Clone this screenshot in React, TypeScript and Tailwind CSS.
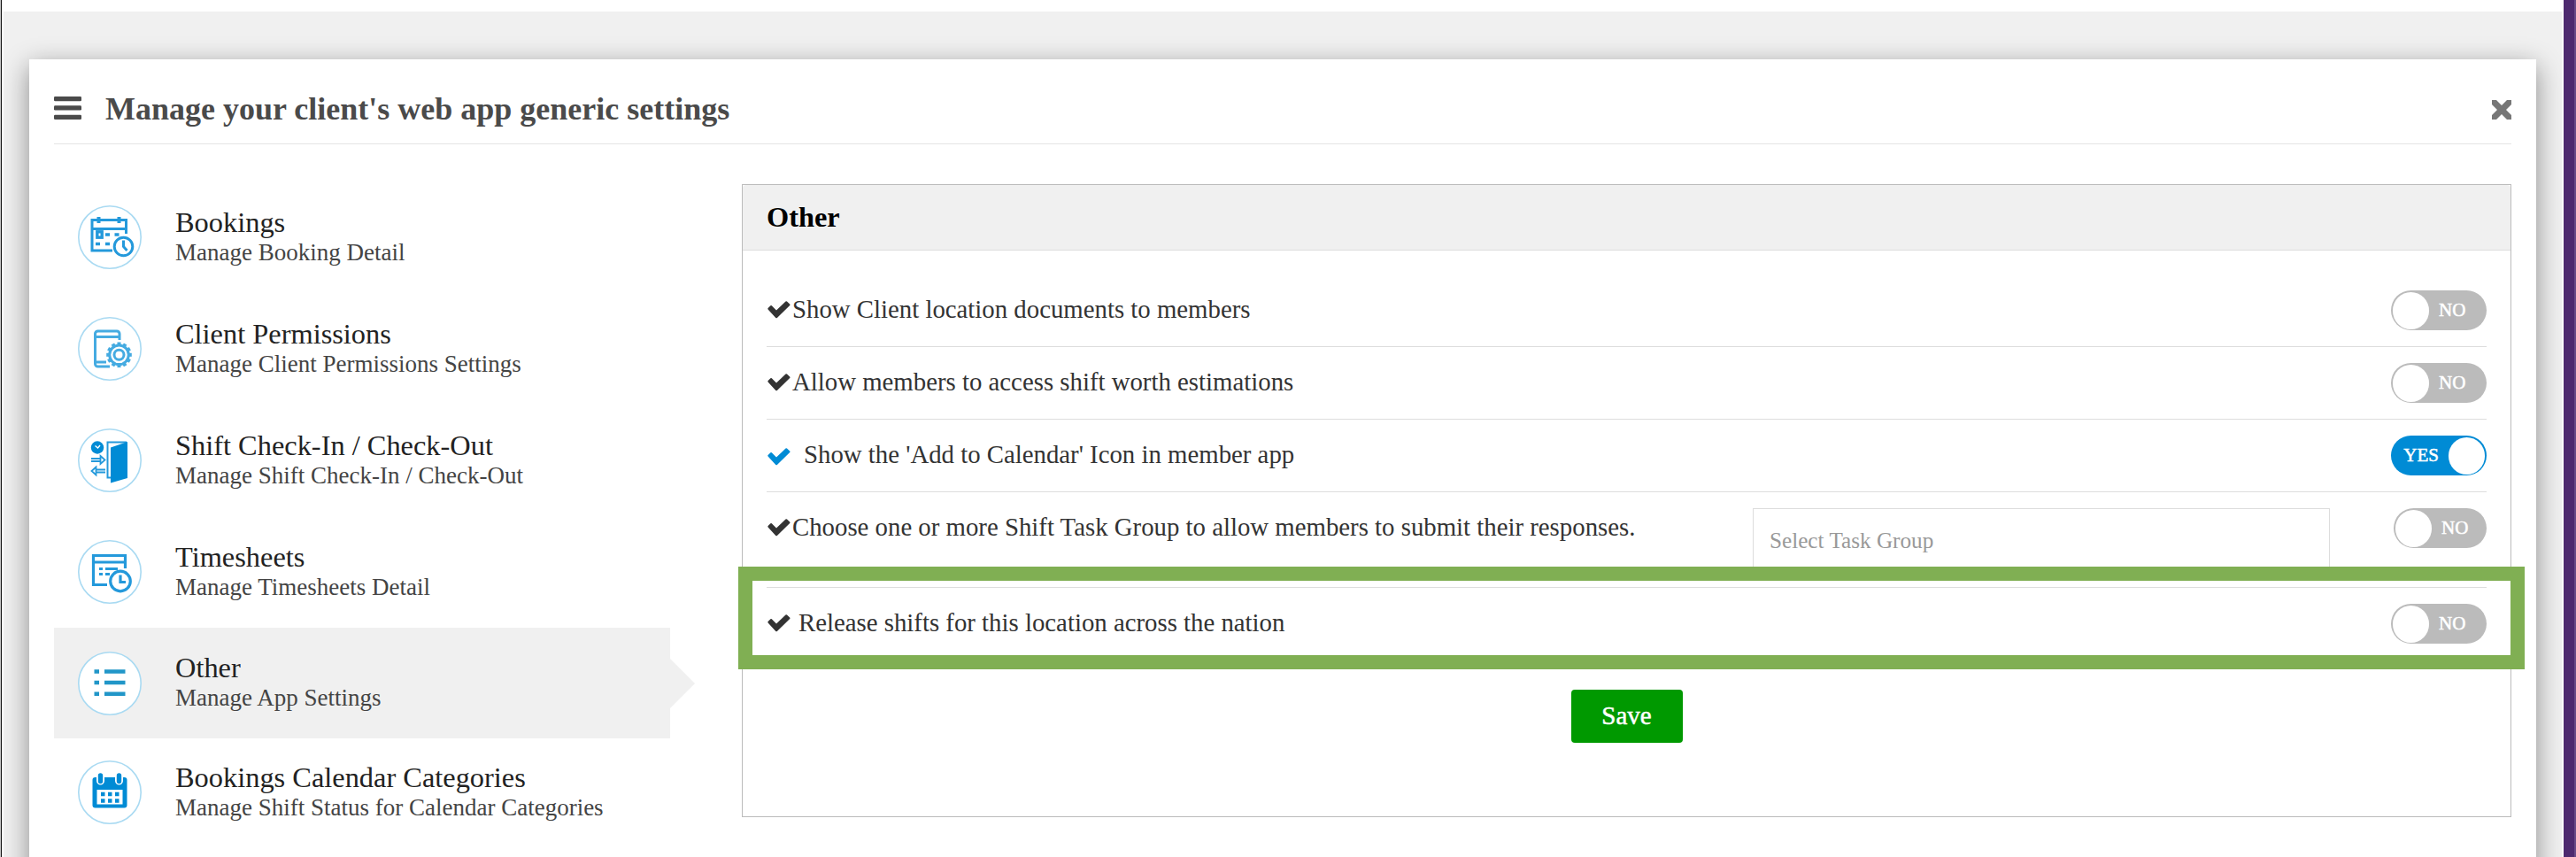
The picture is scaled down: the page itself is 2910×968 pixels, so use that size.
import type { ReactNode } from 'react';
import { clsx } from 'clsx';

const BLUE = '#008bd5';

type MenuItem = {
  title: string;
  subtitle: string;
  icon: ReactNode;
  active?: boolean;
  height: string;
};

type Setting = {
  label: string;
  on?: boolean;
  gap: string;
  select?: string;
  height: string;
};

function IconCircle({ children }: { children: ReactNode }) {
  return (
    <svg viewBox="0 0 72 72" className="h-[72px] w-[72px] shrink-0" fill="none" stroke="#2499db" strokeWidth="3">
      <circle cx="36" cy="36" r="35.2" fill="#fff" stroke="#a9daf2" strokeWidth="1.6" />
      {children}
    </svg>
  );
}

function BookingsIcon() {
  return (
    <IconCircle>
      <path d="M39 51H16V16.5h38.5V32M16 26.5h38.5" />
      <path d="M23.5 13v7M46.5 13v7" strokeWidth="4" />
      <rect x="21.8" y="29.8" width="5.4" height="6.4" strokeWidth="3.4" />
      <path d="M31 33h5M41.5 33h5M20 43.5h5M31 43.5h5" strokeWidth="3.4" />
      <circle cx="51.5" cy="46.5" r="10.3" />
      <path d="M51.5 39.5v7l4 4.5" />
    </IconCircle>
  );
}

function PermissionsIcon() {
  const teeth = Array.from({ length: 12 }, (_, i) => i * 30);
  return (
    <IconCircle>
      <path d="M36 56H22.5a3 3 0 0 1-3-3V19a3 3 0 0 1 3-3H44a3 3 0 0 1 3 3v7M20 22.5h27M20 51h12" stroke="#45abe1" />
      {teeth.map((angle) => (
        <path key={angle} d="M46.5 32.5v-4" strokeWidth="4" stroke="#45abe1" transform={`rotate(${angle} 46.5 42.8)`} />
      ))}
      <circle cx="46.5" cy="42.8" r="10.8" stroke="#45abe1" fill="#fff" />
      <circle cx="46.5" cy="42.8" r="5.5" stroke="#45abe1" />
    </IconCircle>
  );
}

function CheckInIcon() {
  return (
    <IconCircle>
      <circle cx="22" cy="21.5" r="7.2" fill={BLUE} stroke="none" />
      <path d="M19.5 19.5l3 2.5 2.5-3" stroke="#fff" strokeWidth="1.4" />
      <path d="M15 34h11M15 37h11M25.5 31l5 4.5-5 4.5z" strokeWidth="1.8" />
      <path d="M20 46.5h11M20 49.5h11M20.5 43.5l-5 4.5 5 4.5z" strokeWidth="1.8" />
      <path d="M37 55.5h-3.5V15.5H55" strokeWidth="2" />
      <path d="M37 21.5L56 15v41l-19 5.5z" fill={BLUE} stroke="none" />
    </IconCircle>
  );
}

function TimesheetsIcon() {
  return (
    <IconCircle>
      <path d="M33 50.5H17.5v-33h36V32M17.5 25h36" strokeWidth="3.2" />
      <path d="M24 32.5h4M31 32.5h14M24 38.5h4M31 38.5h5" strokeWidth="3.2" />
      <circle cx="48" cy="46.5" r="11.3" strokeWidth="3.2" />
      <path d="M48 39.5v8h6" strokeWidth="3.2" />
    </IconCircle>
  );
}

function ListIcon() {
  return (
    <IconCircle>
      <path
        d="M18.5 22.5h5.5M30 22.5h23.5M18.5 35h5.5M30 35h23.5M18.5 47.8h5.5M30 47.8h23.5"
        stroke="#2196c8"
        strokeWidth="4.4"
      />
    </IconCircle>
  );
}

function CalendarIcon() {
  const dots = [26, 34, 42];
  return (
    <IconCircle>
      <rect x="16.5" y="19" width="39" height="34.5" rx="3" fill={BLUE} stroke="none" />
      <rect x="21.5" y="33" width="29" height="16.5" fill="#fff" stroke="none" />
      <path d="M25.5 14v9M46.5 14v9" stroke="#fff" strokeWidth="9" strokeLinecap="round" />
      <path d="M25.5 17v6.5M46.5 17v6.5" stroke={BLUE} strokeWidth="5.4" strokeLinecap="round" />
      {dots.map((x) => (
        <path key={x} d={`M${x} 38h4.5M${x} 45.5h4.5`} stroke={BLUE} strokeWidth="4.4" />
      ))}
    </IconCircle>
  );
}

function Check({ className }: { className: string }) {
  return (
    <svg viewBox="0 0 26 20" className={clsx('ml-px h-5 w-[26px] shrink-0', className)} fill="currentColor">
      <path d="M0.6 9.5Q0 8.8 0.6 8.1L3.4 5.3Q4.1 4.7 4.8 5.3L10 10.5 20.5 0.6Q21.3 0 22 0.6L25.2 3.6Q25.9 4.3 25.2 5L10.9 18.9Q10.1 19.6 9.3 18.9Z" />
    </svg>
  );
}

function Toggle({ on, narrow }: { on?: boolean; narrow?: boolean }) {
  return (
    <button
      className={clsx(
        'flex h-[45px] shrink-0 items-center rounded-full px-[2px] text-[21px] leading-none text-white [-webkit-text-stroke:0.5px]',
        narrow ? 'w-[105px]' : 'w-[108px]',
        on ? 'flex-row-reverse bg-[#008bd5]' : 'bg-[#bbbbbb]'
      )}
    >
      <span className="h-[42px] w-[41px] rounded-full bg-white" />
      <span className={clsx('-mt-px', on ? 'mr-[11px]' : 'ml-[11px]')}>{on ? 'YES' : 'NO'}</span>
    </button>
  );
}

const menu: MenuItem[] = [
  { title: 'Bookings', subtitle: 'Manage Booking Detail', icon: <BookingsIcon />, height: 'h-[126px]' },
  { title: 'Client Permissions', subtitle: 'Manage Client Permissions Settings', icon: <PermissionsIcon />, height: 'h-[126px]' },
  { title: 'Shift Check-In / Check-Out', subtitle: 'Manage Shift Check-In / Check-Out', icon: <CheckInIcon />, height: 'h-[126px]' },
  { title: 'Timesheets', subtitle: 'Manage Timesheets Detail', icon: <TimesheetsIcon />, height: 'h-[126px]' },
  { title: 'Other', subtitle: 'Manage App Settings', icon: <ListIcon />, active: true, height: 'h-[125px]' },
  { title: 'Bookings Calendar Categories', subtitle: 'Manage Shift Status for Calendar Categories', icon: <CalendarIcon />, height: 'h-[122px]' },
];

const settings: Setting[] = [
  { label: 'Show Client location documents to members', gap: 'ml-[2px]', height: 'h-[82px]' },
  { label: 'Allow members to access shift worth estimations', gap: 'ml-[2px]', height: 'h-[82px]' },
  { label: "Show the 'Add to Calendar' Icon in member app", on: true, gap: 'ml-[15px]', height: 'h-[82px]' },
  {
    label: 'Choose one or more Shift Task Group to allow members to submit their responses.',
    gap: 'ml-[2px]',
    select: 'Select Task Group',
    height: 'h-[108px]',
  },
  { label: 'Release shifts for this location across the nation', gap: 'ml-[9px]', height: 'h-[82px]' },
];

function Sidebar() {
  return (
    <nav className="w-[724px] pt-[42px]">
      {menu.map((item) => (
        <div key={item.title} className={clsx('flex items-center', item.height)}>
          <div className={clsx('flex h-full w-[696px] items-center pl-[27px]', item.active && 'bg-[#f0f0f0]')}>
            {item.icon}
            <div className="-mt-[3px] ml-[38px] whitespace-nowrap">
              <p className="text-[32.4px] leading-9 text-[#222222]">{item.title}</p>
              <p className="text-[27px] leading-8 text-[#444444]">{item.subtitle}</p>
            </div>
          </div>
          {item.active && (
            <svg viewBox="0 0 28 56" className="h-14 w-7">
              <path d="M0 0l28 28L0 56z" fill="#f0f0f0" />
            </svg>
          )}
        </div>
      ))}
    </nav>
  );
}

function SettingRow({ setting, last }: { setting: Setting; last: boolean }) {
  return (
    <div
      className={clsx(
        'flex items-start pt-[18px] whitespace-nowrap',
        setting.height,
        !last && 'border-b border-[#dddddd]'
      )}
    >
      <div className="flex h-[43px] flex-1 items-center text-[28.8px] text-[#333333]">
        <Check className={setting.on ? 'mt-1 text-[#008bd5]' : 'text-[#333333]'} />
        <span className={clsx('leading-[43px]', setting.gap)}>{setting.label}</span>
      </div>
      {setting.select && (
        <div className="mr-[72px] h-[72px] w-[652px] border border-[#dddddd] pl-[18px] text-[25.2px] leading-[71px] text-[#999999]">
          {setting.select}
        </div>
      )}
      <Toggle on={setting.on} narrow={!!setting.select} />
    </div>
  );
}

export default function App() {
  return (
    <div className="flex h-[968px] w-[2910px] overflow-hidden bg-white font-['Liberation_Serif',serif]">
      <div className="w-px bg-[#c4c4c4]" />
      <div className="mr-[2px] w-px bg-[#111111]" />
      <div className="mt-[13px] mr-[2px] flex-1 overflow-hidden bg-[#f0f0f0] pt-[54px] pr-[29px] pl-[29px]">
        <div className="h-[1000px] bg-white px-7 shadow-[0_8px_28px_rgba(0,0,0,0.42)]">
          <header className="flex h-24 items-center justify-between border-b border-[#e5e5e5]">
            <div className="flex items-center">
              <svg viewBox="0 0 31 26" className="mt-[15px] h-[26px] w-[31px]" fill="#4a4a4a">
                <rect width="31" height="5.3" rx="1.3" />
                <rect y="10.3" width="31" height="5.3" rx="1.3" />
                <rect y="20.7" width="31" height="5.3" rx="1.3" />
              </svg>
              <h1 className="mt-[17px] ml-[27px] text-[36px] font-bold text-[#4a4a4a]">Manage your client's web app generic settings</h1>
            </div>
            <svg viewBox="0 0 22 22" className="mt-[19px] h-[22px] w-[22px]" fill="#777777">
              <path d="M0 0H5L11 6 17 0H22V5L16 11 22 17V22H17L11 16 5 22H0V17L6 11 0 5Z" />
            </svg>
          </header>
          <div className="flex items-start justify-between">
            <Sidebar />
            <section className="relative mt-[45px] h-[715px] w-[1999px] border border-[#bbbbbb]">
              <h2 className="h-[74px] rounded-t border-b border-[#dddddd] bg-[#f0f0f0] pl-[27px] text-[32.4px] leading-[73px] font-bold text-black">
                Other
              </h2>
              <div className="pt-[27px] pr-[27px] pl-[27px]">
                {settings.map((setting, i) => (
                  <SettingRow key={setting.label} setting={setting} last={i === settings.length - 1} />
                ))}
              </div>
              <div className="flex justify-center pt-[33px]">
                <button className="h-[60px] w-[126px] rounded bg-[#009900] text-[29px] text-white [-webkit-text-stroke:0.5px]">
                  Save
                </button>
              </div>
              {/* highlight frame over the last row */}
              <div className="absolute top-[431px] -left-[5px] h-[116px] w-[2018px] border-16 border-[#80af53]" />
            </section>
          </div>
        </div>
      </div>
      <div className="w-3 bg-[#4e2a6f]" />
      <div className="w-[2px] bg-[#694a87]" />
    </div>
  );
}
